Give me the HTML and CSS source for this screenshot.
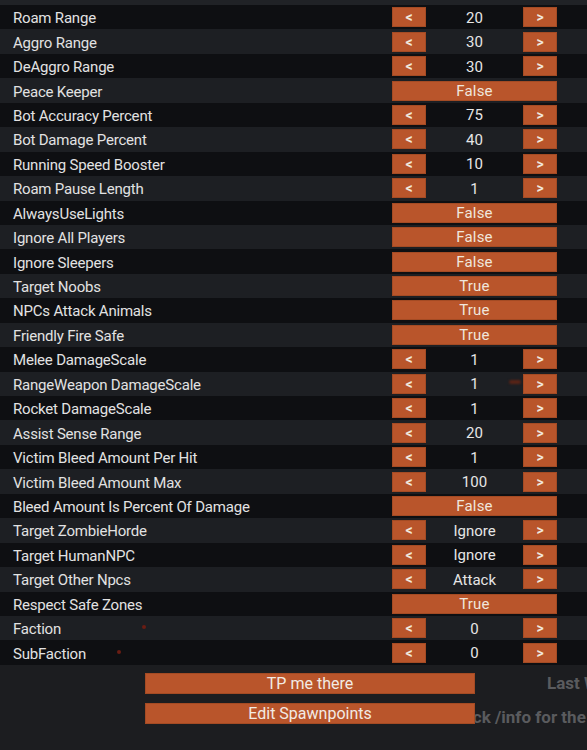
FILE: index.html
```html
<!DOCTYPE html>
<html>
<head>
<meta charset="utf-8">
<link rel="stylesheet" href="styles.css">
</head>
<body>
<div class="topbar"></div>
<div class="table">
  <div class="row"><span class="label">Roam Range</span><div class="ctl"><button class="btn">&lt;</button><span class="val">20</span><button class="btn">&gt;</button></div></div>
  <div class="row"><span class="label">Aggro Range</span><div class="ctl"><button class="btn">&lt;</button><span class="val">30</span><button class="btn">&gt;</button></div></div>
  <div class="row"><span class="label">DeAggro Range</span><div class="ctl"><button class="btn">&lt;</button><span class="val">30</span><button class="btn">&gt;</button></div></div>
  <div class="row"><span class="label">Peace Keeper</span><div class="ctl"><button class="btn wide">False</button></div></div>
  <div class="row"><span class="label">Bot Accuracy Percent</span><div class="ctl"><button class="btn">&lt;</button><span class="val">75</span><button class="btn">&gt;</button></div></div>
  <div class="row"><span class="label">Bot Damage Percent</span><div class="ctl"><button class="btn">&lt;</button><span class="val">40</span><button class="btn">&gt;</button></div></div>
  <div class="row"><span class="label">Running Speed Booster</span><div class="ctl"><button class="btn">&lt;</button><span class="val">10</span><button class="btn">&gt;</button></div></div>
  <div class="row"><span class="label">Roam Pause Length</span><div class="ctl"><button class="btn">&lt;</button><span class="val">1</span><button class="btn">&gt;</button></div></div>
  <div class="row"><span class="label">AlwaysUseLights</span><div class="ctl"><button class="btn wide">False</button></div></div>
  <div class="row"><span class="label">Ignore All Players</span><div class="ctl"><button class="btn wide">False</button></div></div>
  <div class="row"><span class="label">Ignore Sleepers</span><div class="ctl"><button class="btn wide">False</button></div></div>
  <div class="row"><span class="label">Target Noobs</span><div class="ctl"><button class="btn wide">True</button></div></div>
  <div class="row"><span class="label">NPCs Attack Animals</span><div class="ctl"><button class="btn wide">True</button></div></div>
  <div class="row"><span class="label">Friendly Fire Safe</span><div class="ctl"><button class="btn wide">True</button></div></div>
  <div class="row"><span class="label">Melee DamageScale</span><div class="ctl"><button class="btn">&lt;</button><span class="val">1</span><button class="btn">&gt;</button></div></div>
  <div class="row"><span class="label">RangeWeapon DamageScale</span><div class="ctl"><button class="btn">&lt;</button><span class="val">1</span><button class="btn">&gt;</button></div><span class="smudge"></span></div>
  <div class="row"><span class="label">Rocket DamageScale</span><div class="ctl"><button class="btn">&lt;</button><span class="val">1</span><button class="btn">&gt;</button></div></div>
  <div class="row"><span class="label">Assist Sense Range</span><div class="ctl"><button class="btn">&lt;</button><span class="val">20</span><button class="btn">&gt;</button></div></div>
  <div class="row"><span class="label">Victim Bleed Amount Per Hit</span><div class="ctl"><button class="btn">&lt;</button><span class="val">1</span><button class="btn">&gt;</button></div></div>
  <div class="row"><span class="label">Victim Bleed Amount Max</span><div class="ctl"><button class="btn">&lt;</button><span class="val">100</span><button class="btn">&gt;</button></div></div>
  <div class="row"><span class="label">Bleed Amount Is Percent Of Damage</span><div class="ctl"><button class="btn wide">False</button></div></div>
  <div class="row"><span class="label">Target ZombieHorde</span><div class="ctl"><button class="btn">&lt;</button><span class="val">Ignore</span><button class="btn">&gt;</button></div></div>
  <div class="row"><span class="label">Target HumanNPC</span><div class="ctl"><button class="btn">&lt;</button><span class="val">Ignore</span><button class="btn">&gt;</button></div></div>
  <div class="row"><span class="label">Target Other Npcs</span><div class="ctl"><button class="btn">&lt;</button><span class="val">Attack</span><button class="btn">&gt;</button></div></div>
  <div class="row"><span class="label">Respect Safe Zones</span><div class="ctl"><button class="btn wide">True</button></div></div>
  <div class="row"><span class="label">Faction</span><div class="ctl"><button class="btn">&lt;</button><span class="val">0</span><button class="btn">&gt;</button></div><span class="dot dot1"></span></div>
  <div class="row"><span class="label">SubFaction</span><div class="ctl"><button class="btn">&lt;</button><span class="val">0</span><button class="btn">&gt;</button></div><span class="dot dot2"></span></div>
</div>
<div class="footer">
  <button class="fbtn b1">TP me there</button>
  <span class="ghost g1">Last Wipe</span>
  <button class="fbtn b2">Edit Spawnpoints</button>
  <span class="ghost g2">Check /info for the Server</span>
  <div class="bottomrow">
    <span class="gdot"></span>
    <span class="panel"></span>
  </div>
</div>
</body>
</html>
```

FILE: styles.css
```css
* { box-sizing: border-box; }
html, body { margin: 0; padding: 0; }
body {
  width: 587px;
  height: 750px;
  overflow: hidden;
  background: #1c1d20;
  font-family: Roboto, "Liberation Sans", sans-serif;
  color: #e3e3e3;
}
.topbar { height: 5px; background: #202226; }
.table { display: flex; flex-direction: column; }
.row {
  position: relative;
  height: 24.45px;
  display: grid;
  grid-template-columns: 392px 165px 1fr;
  align-items: center;
  background: #0e0f12;
}
.row:nth-child(even) { background: #1d1f23; }
.label {
  padding-left: 13px;
  padding-top: 2px;
  font-size: 15px;
  letter-spacing: -0.2px;
  white-space: nowrap;
  color: #e2e2e2;
}
.ctl {
  display: grid;
  grid-template-columns: 34px 1fr 34px;
  align-items: center;
  height: 20px;
}
.btn {
  height: 20px;
  margin: 0;
  padding: 0;
  border: 1px solid #a44b24;
  background: #b9552b;
  color: #f0e6dc;
  font-family: Roboto, "Liberation Sans", sans-serif;
  font-size: 14px;
  font-weight: 700;
  line-height: 18px;
}
.btn.wide {
  grid-column: 1 / 4;
  font-size: 15px;
  font-weight: 400;
  letter-spacing: 0.2px;
}
.val {
  text-align: center;
  padding-top: 1px;
  font-size: 15px;
  color: #e6e6e6;
}
.dot {
  position: absolute;
  width: 4px;
  height: 4px;
  border-radius: 50%;
  background: #6a1d14;
}
.dot1 { left: 142px; top: 9px; }
.dot2 { left: 117px; top: 10px; }
.smudge {
  position: absolute;
  left: 509px;
  top: 8px;
  width: 12px;
  height: 4px;
  border-radius: 2px;
  background: #5a2416;
  filter: blur(1px);
}
.footer {
  display: grid;
  grid-template-columns: 145px 330px 112px;
  grid-template-rows: 21px 21px 1fr;
  row-gap: 9px;
  padding-top: 8px;
  height: 85px;
}
.fbtn {
  grid-column: 2;
  z-index: 2;
  margin: 0;
  padding: 0;
  border: 1px solid #a44b24;
  background: #b9552b;
  color: #f2ebe4;
  font-family: Roboto, "Liberation Sans", sans-serif;
  font-size: 16px;
  line-height: 19px;
}
.b1 { grid-row: 1; }
.b2 { grid-row: 2; }
.ghost {
  grid-column: 3;
  font-size: 17px;
  font-weight: 700;
  color: #5a5b5e;
  white-space: nowrap;
  overflow: hidden;
  line-height: 21px;
}
.g1 { grid-row: 1; padding-left: 72px; }
.g2 { grid-row: 2; margin-left: -32px; padding-top: 4px; z-index: 1; }
.bottomrow {
  grid-column: 1 / 4;
  grid-row: 3;
  display: flex;
  align-items: flex-end;
  height: 26px;
}
.gdot {
  width: 6px;
  height: 6px;
  border-radius: 50%;
  background: #55575b;
  margin-left: 174px;
  margin-bottom: -3px;
}
.panel {
  margin-left: 319px;
  width: 86px;
  height: 7px;
  background: #1f2734;
  border-left: 3px solid #3d4a2a;
}
```
